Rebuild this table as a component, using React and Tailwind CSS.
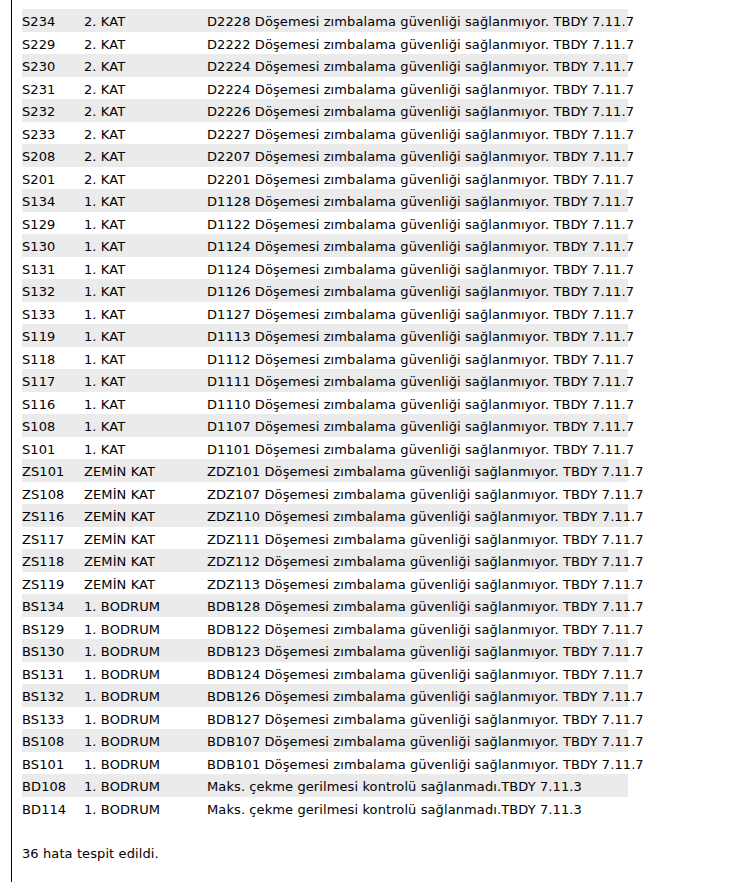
import React from "react";

const rows = [
  ["S234", "2. KAT", "D2228 Döşemesi zımbalama güvenliği sağlanmıyor. TBDY 7.11.7"],
  ["S229", "2. KAT", "D2222 Döşemesi zımbalama güvenliği sağlanmıyor. TBDY 7.11.7"],
  ["S230", "2. KAT", "D2224 Döşemesi zımbalama güvenliği sağlanmıyor. TBDY 7.11.7"],
  ["S231", "2. KAT", "D2224 Döşemesi zımbalama güvenliği sağlanmıyor. TBDY 7.11.7"],
  ["S232", "2. KAT", "D2226 Döşemesi zımbalama güvenliği sağlanmıyor. TBDY 7.11.7"],
  ["S233", "2. KAT", "D2227 Döşemesi zımbalama güvenliği sağlanmıyor. TBDY 7.11.7"],
  ["S208", "2. KAT", "D2207 Döşemesi zımbalama güvenliği sağlanmıyor. TBDY 7.11.7"],
  ["S201", "2. KAT", "D2201 Döşemesi zımbalama güvenliği sağlanmıyor. TBDY 7.11.7"],
  ["S134", "1. KAT", "D1128 Döşemesi zımbalama güvenliği sağlanmıyor. TBDY 7.11.7"],
  ["S129", "1. KAT", "D1122 Döşemesi zımbalama güvenliği sağlanmıyor. TBDY 7.11.7"],
  ["S130", "1. KAT", "D1124 Döşemesi zımbalama güvenliği sağlanmıyor. TBDY 7.11.7"],
  ["S131", "1. KAT", "D1124 Döşemesi zımbalama güvenliği sağlanmıyor. TBDY 7.11.7"],
  ["S132", "1. KAT", "D1126 Döşemesi zımbalama güvenliği sağlanmıyor. TBDY 7.11.7"],
  ["S133", "1. KAT", "D1127 Döşemesi zımbalama güvenliği sağlanmıyor. TBDY 7.11.7"],
  ["S119", "1. KAT", "D1113 Döşemesi zımbalama güvenliği sağlanmıyor. TBDY 7.11.7"],
  ["S118", "1. KAT", "D1112 Döşemesi zımbalama güvenliği sağlanmıyor. TBDY 7.11.7"],
  ["S117", "1. KAT", "D1111 Döşemesi zımbalama güvenliği sağlanmıyor. TBDY 7.11.7"],
  ["S116", "1. KAT", "D1110 Döşemesi zımbalama güvenliği sağlanmıyor. TBDY 7.11.7"],
  ["S108", "1. KAT", "D1107 Döşemesi zımbalama güvenliği sağlanmıyor. TBDY 7.11.7"],
  ["S101", "1. KAT", "D1101 Döşemesi zımbalama güvenliği sağlanmıyor. TBDY 7.11.7"],
  ["ZS101", "ZEMİN KAT", "ZDZ101 Döşemesi zımbalama güvenliği sağlanmıyor. TBDY 7.11.7"],
  ["ZS108", "ZEMİN KAT", "ZDZ107 Döşemesi zımbalama güvenliği sağlanmıyor. TBDY 7.11.7"],
  ["ZS116", "ZEMİN KAT", "ZDZ110 Döşemesi zımbalama güvenliği sağlanmıyor. TBDY 7.11.7"],
  ["ZS117", "ZEMİN KAT", "ZDZ111 Döşemesi zımbalama güvenliği sağlanmıyor. TBDY 7.11.7"],
  ["ZS118", "ZEMİN KAT", "ZDZ112 Döşemesi zımbalama güvenliği sağlanmıyor. TBDY 7.11.7"],
  ["ZS119", "ZEMİN KAT", "ZDZ113 Döşemesi zımbalama güvenliği sağlanmıyor. TBDY 7.11.7"],
  ["BS134", "1. BODRUM", "BDB128 Döşemesi zımbalama güvenliği sağlanmıyor. TBDY 7.11.7"],
  ["BS129", "1. BODRUM", "BDB122 Döşemesi zımbalama güvenliği sağlanmıyor. TBDY 7.11.7"],
  ["BS130", "1. BODRUM", "BDB123 Döşemesi zımbalama güvenliği sağlanmıyor. TBDY 7.11.7"],
  ["BS131", "1. BODRUM", "BDB124 Döşemesi zımbalama güvenliği sağlanmıyor. TBDY 7.11.7"],
  ["BS132", "1. BODRUM", "BDB126 Döşemesi zımbalama güvenliği sağlanmıyor. TBDY 7.11.7"],
  ["BS133", "1. BODRUM", "BDB127 Döşemesi zımbalama güvenliği sağlanmıyor. TBDY 7.11.7"],
  ["BS108", "1. BODRUM", "BDB107 Döşemesi zımbalama güvenliği sağlanmıyor. TBDY 7.11.7"],
  ["BS101", "1. BODRUM", "BDB101 Döşemesi zımbalama güvenliği sağlanmıyor. TBDY 7.11.7"],
  ["BD108", "1. BODRUM", "Maks. çekme gerilmesi kontrolü sağlanmadı.TBDY 7.11.3"],
  ["BD114", "1. BODRUM", "Maks. çekme gerilmesi kontrolü sağlanmadı.TBDY 7.11.3"],
];

export default function App() {
  return (
    <div
      className="min-h-[882px] w-[737px] bg-white text-black text-[13px] tracking-[0.1px]"
      style={{ fontFamily: '"DejaVu Sans", Verdana, sans-serif' }}
    >
      <div className="ml-[11px] min-h-[882px] border-l border-black pl-[10px] pt-[9px]">
        <div className="flex w-[606px] flex-col">
          {rows.map((r, i) => (
            <div
              key={i}
              className={`flex h-[22.5px] items-center whitespace-nowrap pt-[3px] ${
                i % 2 === 0 ? "bg-[#ebebeb]" : "bg-white"
              }`}
            >
              <div className="w-[62px] shrink-0">{r[0]}</div>
              <div className="w-[123px] shrink-0">{r[1]}</div>
              <div className="shrink-0">{r[2]}</div>
            </div>
          ))}
        </div>
        <div className="mt-[22px] flex h-[22.5px] items-center pt-[3px]">36 hata tespit edildi.</div>
      </div>
    </div>
  );
}
